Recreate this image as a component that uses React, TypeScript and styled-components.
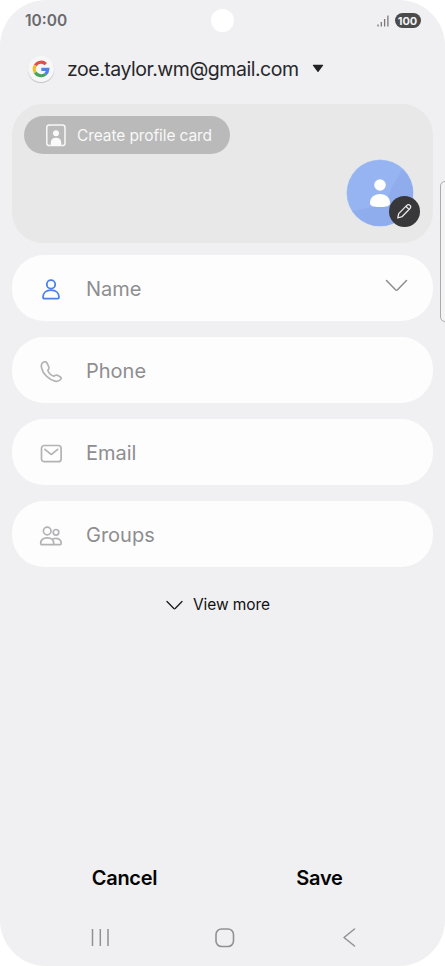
import React from "react";
import styled, { createGlobalStyle } from "styled-components";

const GlobalStyle = createGlobalStyle`
  * { box-sizing: border-box; }
  body { margin: 0; background: #fff; font-family: Inter, "Open Sans", sans-serif; }
  button { font: inherit; border: 0; background: none; padding: 0; margin: 0; color: inherit; }
  svg { display: block; flex: none; }
`;

const Screen = styled.main`
  position: relative;
  display: flex;
  flex-direction: column;
  width: 445px;
  height: 966px;
  overflow: hidden;
  background: #f0f0f2;
  border-radius: 46px;
`;

const Label = styled.span<{ $size: number; $track?: number; $weight?: number; $color?: string }>`
  font-size: ${(p) => p.$size}px;
  line-height: 26px;
  letter-spacing: ${(p) => p.$track ?? 0}px;
  font-weight: ${(p) => p.$weight ?? 400};
  color: ${(p) => p.$color ?? "inherit"};
  white-space: nowrap;
`;

const StatusBar = styled.header`
  display: grid;
  grid-template-columns: 1fr 23px 1fr;
  align-items: center;
  height: 42px;
  padding: 0 24.5px 0 25px;
`;

const Camera = styled.div`
  width: 23px;
  height: 23px;
  margin-top: -1px;
  border-radius: 50%;
  background: #fff;
`;

const Indicators = styled.div`
  display: flex;
  align-items: center;
  justify-content: flex-end;
  gap: 6px;
`;

const Battery = styled.div`
  display: flex;
  align-items: center;
  justify-content: center;
  width: 26px;
  height: 15px;
  margin-top: -1px;
  border-radius: 8px;
  background: #4b4b4c;
`;

const AccountPicker = styled.button`
  display: flex;
  align-items: center;
  height: 54px;
  padding-left: 28px;
  color: #27272a;
`;

const GoogleBadge = styled.span`
  display: flex;
  align-items: center;
  justify-content: center;
  width: 26px;
  height: 26px;
  margin-right: 13px;
  border-radius: 50%;
  background: #f7f7f7;
  box-shadow: 0 1px 1px rgba(0, 0, 0, 0.2);
`;

const Caret = styled.svg`
  margin: -1px 0 0 13.5px;
`;

const ProfileCard = styled.section`
  display: flex;
  justify-content: space-between;
  height: 139px;
  margin: 8px 12px 0;
  padding: 12px 19px 16px 12px;
  border-radius: 31px;
  background: #e8e8e8;
`;

const ProfileButton = styled.button`
  display: flex;
  align-items: center;
  gap: 11px;
  width: 206px;
  height: 38px;
  padding-left: 22px;
  border-radius: 19px;
  background: #bababa;
  color: #f8f8f8;
`;

const ProfileLabel = styled(Label)`
  padding-top: 1px;
`;

const Avatar = styled.div`
  position: relative;
  align-self: flex-end;
  width: 68px;
  height: 68px;
`;

const EditBadge = styled.button`
  position: absolute;
  right: -5.5px;
  bottom: 0;
  display: flex;
  align-items: center;
  justify-content: center;
  width: 31px;
  height: 31px;
  border-radius: 50%;
  background: #38383a;
`;

const Fields = styled.div`
  display: flex;
  flex-direction: column;
  gap: 16px;
  margin: 11.5px 12px 0;
`;

const Field = styled.div`
  display: flex;
  align-items: center;
  height: 66.2px;
  padding: 2px 25px 0 26px;
  border-radius: 32px;
  background: #fdfdfe;
`;

const FieldIcon = styled.svg`
  width: 26px;
  height: 26px;
  margin: 2px 22px 0 0;
  fill: none;
  stroke: #b3b3b5;
  stroke-width: 1.7;
  stroke-linecap: round;
  stroke-linejoin: round;
`;

const Expand = styled.svg`
  margin: -5px 0 0 auto;
`;

const ViewMore = styled.button`
  display: flex;
  align-items: center;
  align-self: flex-start;
  gap: 10px;
  margin: 25px 0 0 166px;
  color: #111;
`;

const Actions = styled.div`
  display: grid;
  grid-template-columns: 1fr 1fr;
  margin: auto 28px 0 27px;
  height: 40px;
  color: #050505;
`;

const NavBar = styled.nav`
  display: grid;
  grid-template-columns: 1fr 1fr 1fr;
  justify-items: center;
  align-items: center;
  height: 57px;
  margin-top: 11px;
  padding: 0 33px 0 37px;
`;

const EdgeHandle = styled.div`
  position: absolute;
  top: 181px;
  right: -6px;
  width: 11px;
  height: 141px;
  border: 1px solid #aaaaac;
  border-radius: 5px;
  background: #f4f4f5;
`;

const icons = {
  name: (
    <>
      <circle cx="13" cy="7.400" r="4.200" />
      <path d="M5 20.200c0-4.300 3.100-7 8-7s8 2.700 8 7c0 1-.5 1.500-1.400 1.500H6.400C5.500 21.700 5 21.200 5 20.200Z" />
    </>
  ),
  phone: (
    <path d="M5.700 3.100C3.700 4.100 2.900 6.200 3.600 9c1.100 5.700 7.300 11.700 13.400 13.100 2.500.6 4.800-.2 6-2.200.4-.7.300-1.500-.6-2l-2.500-1.400c-.9-.5-2-.6-2.800-.1l-1.200.9c-2.900-1-5.200-3.400-6.100-6.100l.9-1.200c.5-.8.400-1.800-.1-2.700L9 4.100c-.7-1.400-1.900-1.700-3.300-1Z" />
  ),
  email: (
    <>
      <rect x="3.500" y="4.500" width="19.600" height="16.200" rx="2.800" />
      <path d="m6.900 8.400 5.500 4.500c.6.500 1.200.5 1.800 0l5.500-4.500" />
    </>
  ),
  groups: (
    <>
      <circle cx="9.200" cy="8" r="3.800" />
      <circle cx="18" cy="9.300" r="2.800" />
      <path d="M2.700 20.500c0-3.800 2.400-5.700 6.500-5.700s6.500 1.900 6.500 5.700c0 .8-.4 1.200-1.200 1.200H3.900c-.8 0-1.200-.4-1.200-1.200Z" />
      <path d="M15 15.800c4.600-1.500 8.200.5 8.200 4.700 0 .8-.4 1.200-1.200 1.200h-7" />
    </>
  ),
};

const fields: { id: keyof typeof icons; label: string }[] = [
  { id: "name", label: "Name" },
  { id: "phone", label: "Phone" },
  { id: "email", label: "Email" },
  { id: "groups", label: "Groups" },
];

const NameIcon = styled(FieldIcon)`
  stroke: #4b80e9;
  stroke-width: 1.8;
`;

const ActionButton = styled.button`
  display: flex;
  align-items: center;
  justify-content: center;
`;

export default function App() {
  return (
    <>
      <GlobalStyle />
      <Screen>
        <StatusBar>
          <Label $size={15.5} $weight={600} $color="#6a6a6c">10:00</Label>
          <Camera />
          <Indicators>
            <svg width="12" height="13" fill="none" stroke="#77777a" strokeWidth="1.300">
              <path d="M1 9.500v2M4.300 7v4.500M7.600 4v7.500M10.900 .5v11" />
            </svg>
            <Battery>
              <Label $size={11} $weight={700} $color="#f4f4f4">100</Label>
            </Battery>
          </Indicators>
        </StatusBar>

        <AccountPicker>
          <GoogleBadge>
            <svg width="18" height="18" viewBox="0 0 18 18" fill="none" strokeWidth="3.200">
              <path d="M13.800 4.200A6.700 6.700 0 0 0 3.300 5.400" stroke="#df5044" />
              <path d="M3.300 5.400a7 7 0 0 0 0 7.200" stroke="#f5bd2c" />
              <path d="M3.300 12.600a6.800 6.800 0 0 0 10.200 1.500" stroke="#43a45b" />
              <path d="M13.500 14.100A6.800 6.800 0 0 0 15.800 9.300H9.300" stroke="#4d83e8" />
            </svg>
          </GoogleBadge>
          <Label $size={19.5} $track={-0.47}>zoe.taylor.wm@gmail.com</Label>
          <Caret width="12" height="9" fill="#232325">
            <path d="M1.300 0.700h9.400q.9 0 .4.700L6.500 7.700q-.5.600-1 0L.9 1.400q-.5-.7.400-.7Z" />
          </Caret>
        </AccountPicker>

        <ProfileCard>
          <ProfileButton>
            <svg width="20" height="23" viewBox="0 0 20 23">
              <rect x=".8" y="1" width="18.200" height="20.500" rx="2.600" fill="none" stroke="#f8f8f8" strokeWidth="1.500" />
              <circle cx="10" cy="9.300" r="3" fill="#fafafa" />
              <path d="M4.800 21.500v-2.700c0-3.300 1.900-5 5.200-5s5.200 1.700 5.200 5v2.700Z" fill="#fafafa" />
            </svg>
            <ProfileLabel $size={15.5} $track={-0.1}>Create profile card</ProfileLabel>
          </ProfileButton>
          <Avatar>
            <svg width="68" height="68" viewBox="0 0 68 68">
              <defs>
                <clipPath id="disc"><circle cx="34" cy="34" r="33" /></clipPath>
                <linearGradient id="shade" x1="0" y1="0" x2="1" y2="1">
                  <stop offset="0" stopColor="#95b4f1" />
                  <stop offset=".5" stopColor="#8facec" />
                  <stop offset="1" stopColor="#8facec" />
                </linearGradient>
              </defs>
              <circle cx="34" cy="34" r="33.500" fill="#b4c9f3" />
              <g clipPath="url(#disc)">
                <path d="M0 0h68v68H0Z" fill="#95b4f1" />
                <path d="M56 10 46 28l-7 18L5 52l12 16h51V18Z" fill="url(#shade)" />
              </g>
              <circle cx="34" cy="26" r="5.800" fill="#fff" />
              <path d="M24 44c0-5.500 4-9 10-9s10 3.500 10 9c0 3-3.500 4-10 4s-10-1-10-4Z" fill="#fff" />
            </svg>
            <EditBadge aria-label="Edit photo">
              <svg width="19" height="19" viewBox="0 0 19 19" fill="none" stroke="#e8e8e8" strokeWidth="1.300" strokeLinejoin="round">
                <path d="m2.800 16 .9-4.400 8.100-8.200c1-1 2.200-1.100 3.100-.2 1.100 1 1.100 2.300.1 3.300l-8 8.200L2.800 16ZM10.900 4.300l3.200 3.200" />
              </svg>
            </EditBadge>
          </Avatar>
        </ProfileCard>

        <Fields>
          {fields.map(({ id, label }) => {
            const Icon = id === "name" ? NameIcon : FieldIcon;
            return (
              <Field key={id}>
                <Icon viewBox="0 0 26 26">{icons[id]}</Icon>
                <Label $size={20} $color="#8e8e90">{label}</Label>
                {id === "name" && (
                  <Expand width="23" height="14" fill="none" stroke="#8c8c8e" strokeWidth="1.500" strokeLinecap="round">
                    <path d="m1.500 1.500 9 9.300q1 .9 2 0l9-9.300" />
                  </Expand>
                )}
              </Field>
            );
          })}
        </Fields>

        <ViewMore>
          <svg width="17" height="11" fill="none" stroke="#1a1a1b" strokeWidth="1.300" strokeLinecap="round">
            <path d="m1 1.500 6.800 7q.7.600 1.400 0l6.800-7" />
          </svg>
          <Label $size={15.5} $track={-0.1}>View more</Label>
        </ViewMore>

        <Actions>
          <ActionButton><Label $size={20} $track={-0.25} $weight={600}>Cancel</Label></ActionButton>
          <ActionButton><Label $size={20} $track={-0.25} $weight={600}>Save</Label></ActionButton>
        </Actions>

        <NavBar>
          <svg width="20" height="20" fill="none" stroke="#919193" strokeWidth="1.500">
            <path d="M2.500 1v17M10.300 1v17M18 1v17" />
          </svg>
          <svg width="20" height="20" fill="none" stroke="#919193" strokeWidth="1.600">
            <rect x="1" y="1" width="17.500" height="17.500" rx="5.500" />
          </svg>
          <svg width="14" height="20" fill="none" stroke="#919193" strokeWidth="1.500" strokeLinecap="round" strokeLinejoin="round">
            <path d="M11.500 1 1 9.500 11.500 18" />
          </svg>
        </NavBar>
        <EdgeHandle />
      </Screen>
    </>
  );
}
